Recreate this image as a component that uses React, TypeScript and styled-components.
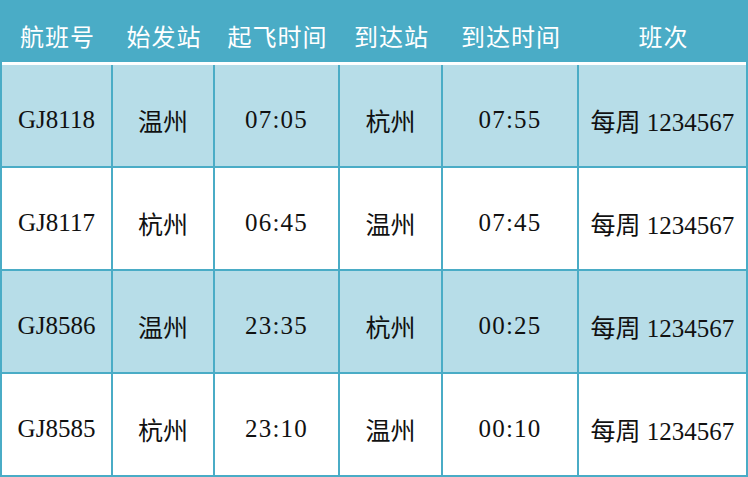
import React from "react";
import styled, { createGlobalStyle } from "styled-components";

const TEAL = "#4aacc6";
const LIGHT = "#b7dde8";

const GlobalStyle = createGlobalStyle`
  body {
    margin: 0;
    background: #ffffff;
  }
`;

const COLUMNS = "111px 102px 125px 103px 136px 169px";

const headers = ["航班号", "始发站", "起飞时间", "到达站", "到达时间", "班次"];

const flights = [
  ["GJ8118", "温州", "07:05", "杭州", "07:55", "每周 1234567"],
  ["GJ8117", "杭州", "06:45", "温州", "07:45", "每周 1234567"],
  ["GJ8586", "温州", "23:35", "杭州", "00:25", "每周 1234567"],
  ["GJ8585", "杭州", "23:10", "温州", "00:10", "每周 1234567"],
];

const App = () => {
  return (
    <>
      <GlobalStyle />
      <S.Table>
        <S.HeaderRow>
          {headers.map((h) => (
            <S.HeaderCell key={h}>{h}</S.HeaderCell>
          ))}
        </S.HeaderRow>
        <S.Divider />
        <S.Body>
          {flights.map((row, i) => (
            <S.Row key={row[0]} $shaded={i % 2 === 0}>
              {row.map((cell, j) => (
                <S.Cell key={j} $time={j === 2 || j === 4}>
                  {cell}
                </S.Cell>
              ))}
            </S.Row>
          ))}
        </S.Body>
      </S.Table>
    </>
  );
};

const S = {
  Table: styled.div`
    width: 748px;
    height: 477px;
    box-sizing: border-box;
    display: flex;
    flex-direction: column;
    border-left: 2px solid ${TEAL};
    background: ${TEAL};
  `,
  HeaderRow: styled.div`
    display: grid;
    grid-template-columns: ${COLUMNS};
    height: 62px;
    margin-left: -2px;
    padding-left: 2px;
    background: ${TEAL};
  `,
  HeaderCell: styled.div`
    display: flex;
    align-items: center;
    justify-content: center;
    padding-top: 9px;
    color: #ffffff;
    font-family: "Noto Sans CJK SC", sans-serif;
    font-size: 24px;
    letter-spacing: 1px;
  `,
  Divider: styled.div`
    height: 3px;
    background: #ffffff;
    margin-right: 2px;
  `,
  Body: styled.div`
    display: flex;
    flex-direction: column;
  `,
  Row: styled.div<{ $shaded: boolean }>`
    display: grid;
    grid-template-columns: ${COLUMNS};
    height: 103px;
    background: ${({ $shaded }) => ($shaded ? LIGHT : "#ffffff")};
  `,
  Cell: styled.div<{ $time: boolean }>`
    box-sizing: border-box;
    display: flex;
    align-items: center;
    justify-content: center;
    padding-top: 9px;
    border-right: 2px solid ${TEAL};
    border-bottom: 2px solid ${TEAL};
    color: #111111;
    font-family: "Liberation Serif", "Noto Sans CJK SC", serif;
    font-size: 25px;
    letter-spacing: ${({ $time }) => ($time ? "1.2px" : "0")};
    white-space: nowrap;
  `,
};

export default App;
